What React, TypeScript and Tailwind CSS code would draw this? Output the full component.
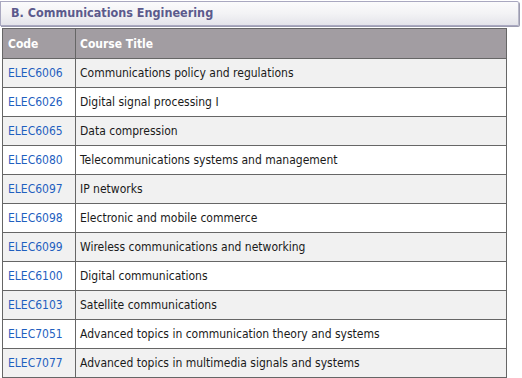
import React from 'react';

const COURSES = [
  ['ELEC6006', 'Communications policy and regulations'],
  ['ELEC6026', 'Digital signal processing I'],
  ['ELEC6065', 'Data compression'],
  ['ELEC6080', 'Telecommunications systems and management'],
  ['ELEC6097', 'IP networks'],
  ['ELEC6098', 'Electronic and mobile commerce'],
  ['ELEC6099', 'Wireless communications and networking'],
  ['ELEC6100', 'Digital communications'],
  ['ELEC6103', 'Satellite communications'],
  ['ELEC7051', 'Advanced topics in communication theory and systems'],
  ['ELEC7077', 'Advanced topics in multimedia signals and systems'],
];

export default function App() {
  return (
    <div
      className="w-[522px] h-[378px] overflow-hidden bg-white pt-px"
      style={{ fontFamily: '"DejaVu Sans Condensed", "DejaVu Sans", Tahoma, sans-serif' }}
    >
      {/* Section heading */}
      <div className="w-[519px] h-[25px] flex items-center pl-[10px] border border-[#a9a8c0] border-r-[#b8b8c8] rounded-r-[2px] bg-gradient-to-b from-[#fbfbfc] via-[#f3f3f5] to-[#e4e4ea] shadow-[1px_1px_0_#9c9cb0]">
        <span className="text-[12.5px] font-bold text-[#5b5a8c]">B. Communications Engineering</span>
      </div>

      {/* Course table */}
      <table className="ml-[2px] mt-[2px] w-[505px] border-collapse border-[1.5px] border-[#666] text-[12px]">
        <thead>
          <tr className="bg-[#a29da2] h-[30px]">
            <th className="w-[73px] border-[1.5px] border-[#666] text-left font-bold text-white pl-[5px]">Code</th>
            <th className="border-[1.5px] border-[#666] text-left font-bold text-white pl-[4px]">Course Title</th>
          </tr>
        </thead>
        <tbody>
          {COURSES.map(([code, title], i) => (
            <tr key={code} className={`h-[29px] ${i % 2 === 0 ? 'bg-[#f1f1f1]' : 'bg-white'}`}>
              <td className="border-[1.5px] border-[#666] pl-[5px] text-[#1f5fbf]">{code}</td>
              <td className="border-[1.5px] border-[#666] pl-[4px] text-[#1a1a1a]">{title}</td>
            </tr>
          ))}
        </tbody>
      </table>
    </div>
  );
}
